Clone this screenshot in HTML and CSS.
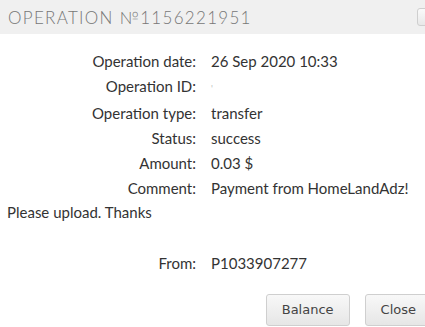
FILE: index.html
```html
<!DOCTYPE html>
<html lang="en">
<head>
    <meta charset="UTF-8">
    <title>Operation</title>
    <link rel="stylesheet" href="styles.css">
</head>
<body>

    <div class="dialog">
        <div class="dialog-title">
            <span>OPERATION №1156221951</span>
            <button class="close-x" title="Close"></button>
        </div>

        <div class="dialog-body">
            <div class="row"><span class="label">Operation date:</span>26 Sep 2020 10:33</div>
            <div class="row"><span class="label">Operation ID:</span><span class="tick">'</span></div>
            <div class="row"><span class="label">Operation type:</span>transfer</div>
            <div class="row"><span class="label">Status:</span>success</div>
            <div class="row"><span class="label">Amount:</span>0.03 $</div>
            <div class="row"><span class="label">Comment:</span>Payment from HomeLandAdz! Please upload. Thanks</div>
            <div class="row from"><span class="label">From:</span>P1033907277</div>
        </div>

        <div class="dialog-buttons">
            <button>Balance</button>
            <button>Close</button>
        </div>
    </div>

</body>
</html>
```

FILE: styles.css
```css
body {
    margin: 0;
    background-color: #fff;
    font-family: Lato, "Open Sans", sans-serif;
    color: #333;
    overflow: hidden;
}
.dialog {
    width: 440px;
}
.dialog-title {
    background-color: #f0f0f0;
    height: 34px;
    padding-left: 8px;
    display: flex;
    align-items: center;
    justify-content: space-between;
    color: #777;
    font-size: 17px;
    font-weight: 300;
    letter-spacing: 1.3px;
}
.close-x {
    width: 20px;
    height: 18px;
    margin-right: 3px;
    border: 1px solid #cfcfcf;
    border-radius: 3px;
    background: linear-gradient(#fafafa, #e8e8e8);
    padding: 0;
}
.dialog-body {
    padding: 15px 0 0 7px;
    font-size: 15px;
    width: 418px;
}
.row {
    line-height: 24.7px;
}
.label {
    display: inline-block;
    width: 189px;
    padding-right: 15px;
    text-align: right;
}
.tick {
    color: #bbb;
    font-size: 9px;
}
.from {
    margin-top: 26px;
}
.dialog-buttons {
    display: flex;
    justify-content: flex-end;
    gap: 15px;
    padding: 18px 0 0 0;
    width: 432px;
}
.dialog-buttons button {
    font-family: "DejaVu Sans", sans-serif;
    font-size: 13px;
    color: #444;
    height: 32px;
    padding: 0 15px;
    border: 1px solid #cfcfcf;
    border-radius: 3px;
    background: linear-gradient(#f8f8f8, #e6e6e6);
}
```
